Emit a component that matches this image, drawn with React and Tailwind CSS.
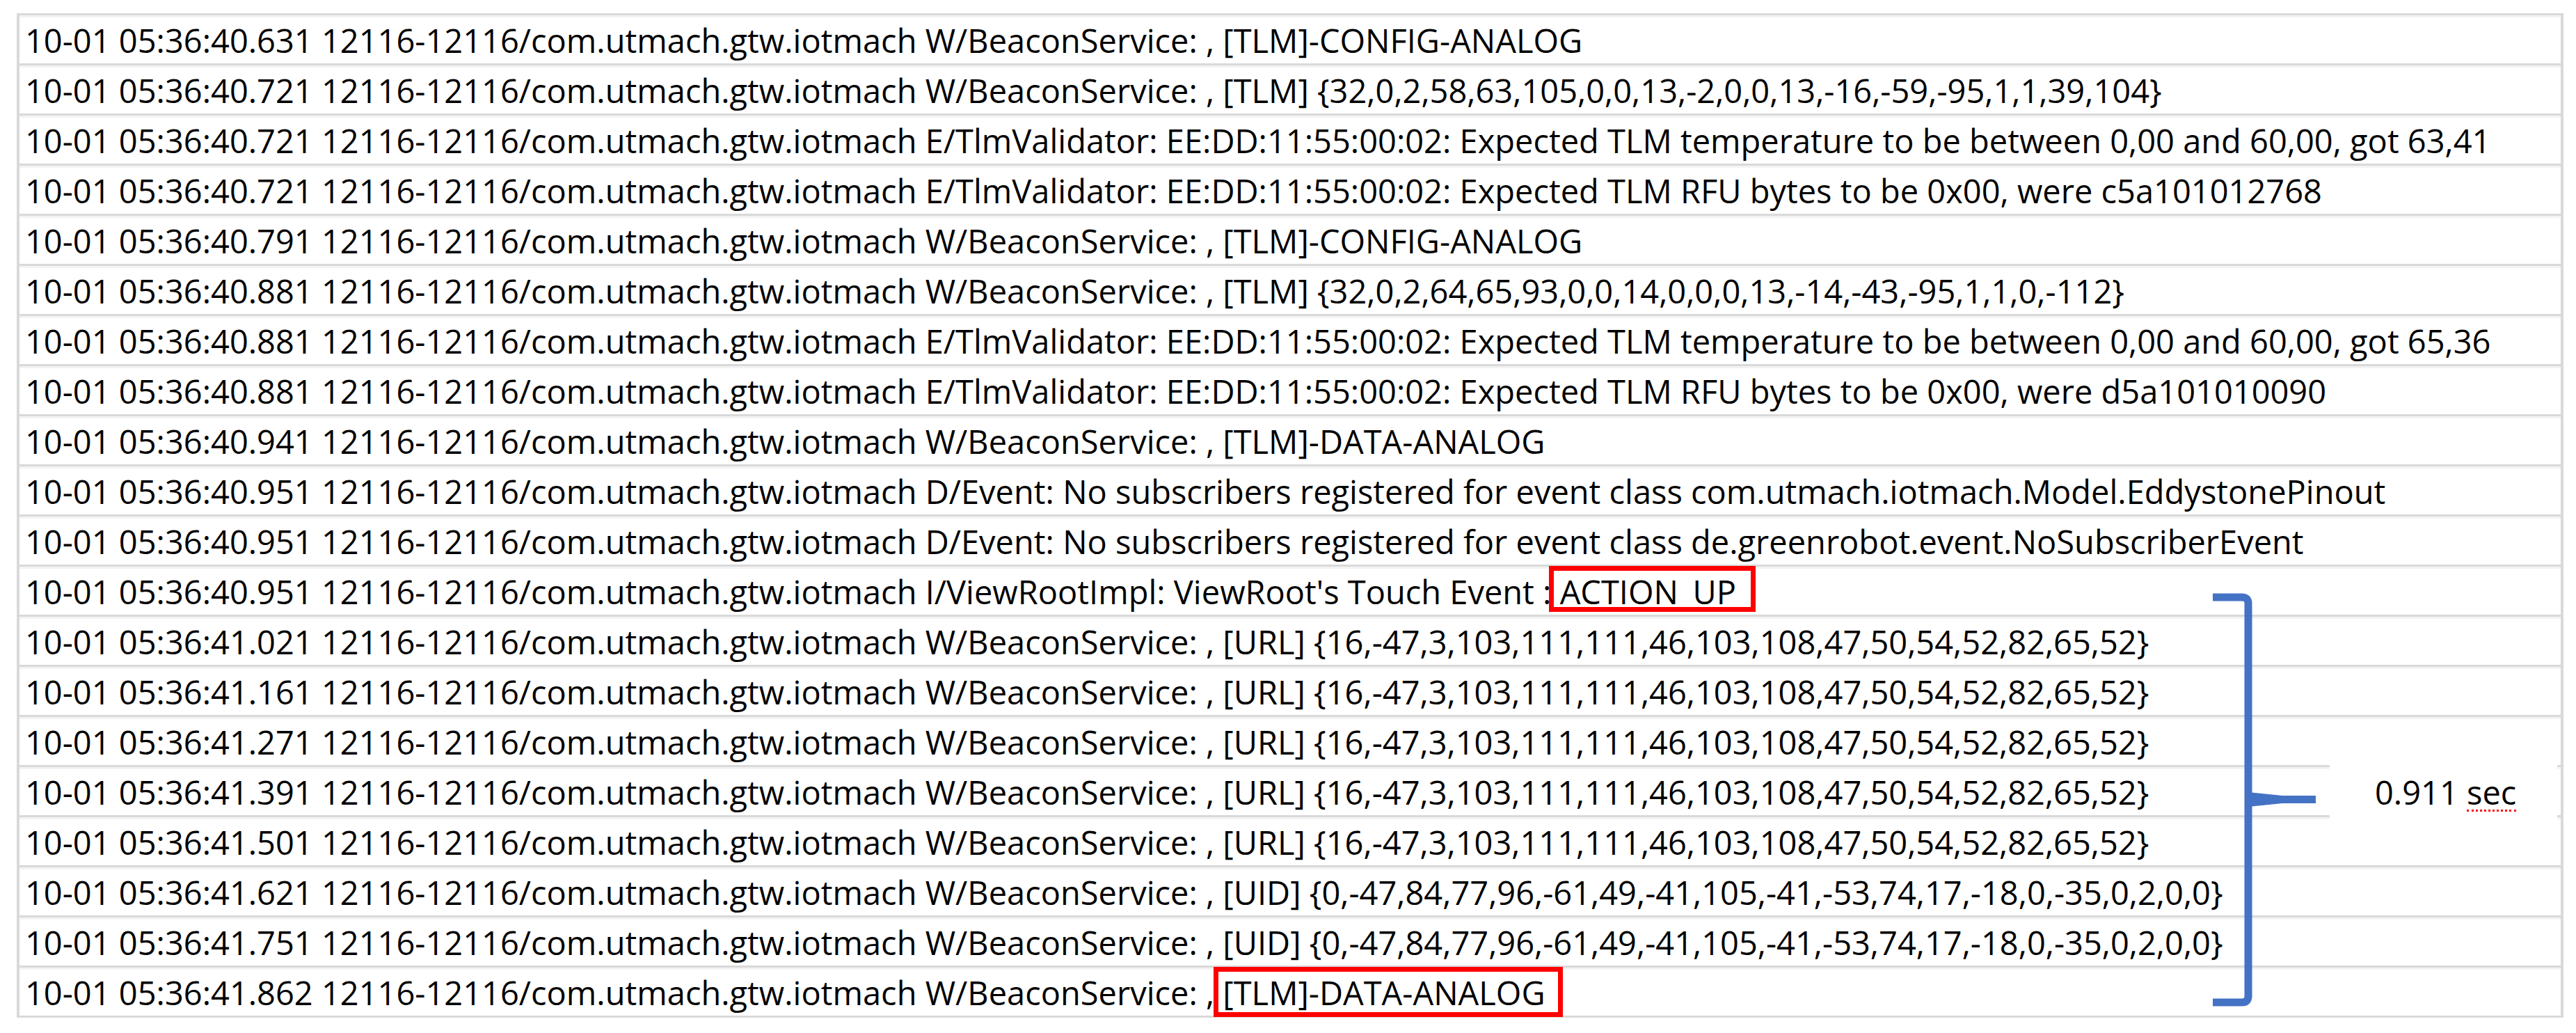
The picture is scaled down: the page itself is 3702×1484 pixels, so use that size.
import React from "react";

const P = "12116-12116/com.utmach.gtw.iotmach";
const URLV = "[URL] {16,-47,3,103,111,111,46,103,108,47,50,54,52,82,65,52}";
const UIDV = "[UID] {0,-47,84,77,96,-61,49,-41,105,-41,-53,74,17,-18,0,-35,0,2,0,0}";

const rows = [
  { t: `10-01 05:36:40.631 ${P} W/BeaconService: , [TLM]-CONFIG-ANALOG` },
  { t: `10-01 05:36:40.721 ${P} W/BeaconService: , [TLM] {32,0,2,58,63,105,0,0,13,-2,0,0,13,-16,-59,-95,1,1,39,104}` },
  { t: `10-01 05:36:40.721 ${P} E/TlmValidator: EE:DD:11:55:00:02: Expected TLM temperature to be between 0,00 and 60,00, got 63,41` },
  { t: `10-01 05:36:40.721 ${P} E/TlmValidator: EE:DD:11:55:00:02: Expected TLM RFU bytes to be 0x00, were c5a101012768` },
  { t: `10-01 05:36:40.791 ${P} W/BeaconService: , [TLM]-CONFIG-ANALOG` },
  { t: `10-01 05:36:40.881 ${P} W/BeaconService: , [TLM] {32,0,2,64,65,93,0,0,14,0,0,0,13,-14,-43,-95,1,1,0,-112}` },
  { t: `10-01 05:36:40.881 ${P} E/TlmValidator: EE:DD:11:55:00:02: Expected TLM temperature to be between 0,00 and 60,00, got 65,36` },
  { t: `10-01 05:36:40.881 ${P} E/TlmValidator: EE:DD:11:55:00:02: Expected TLM RFU bytes to be 0x00, were d5a101010090` },
  { t: `10-01 05:36:40.941 ${P} W/BeaconService: , [TLM]-DATA-ANALOG` },
  { t: `10-01 05:36:40.951 ${P} D/Event: No subscribers registered for event class com.utmach.iotmach.Model.EddystonePinout` },
  { t: `10-01 05:36:40.951 ${P} D/Event: No subscribers registered for event class de.greenrobot.event.NoSubscriberEvent` },
  { t: `10-01 05:36:40.951 ${P} I/ViewRootImpl: ViewRoot's Touch Event : `, box: "ACTION_UP", kind: 1 },
  { t: `10-01 05:36:41.021 ${P} W/BeaconService: , ${URLV}` },
  { t: `10-01 05:36:41.161 ${P} W/BeaconService: , ${URLV}` },
  { t: `10-01 05:36:41.271 ${P} W/BeaconService: , ${URLV}` },
  { t: `10-01 05:36:41.391 ${P} W/BeaconService: , ${URLV}` },
  { t: `10-01 05:36:41.501 ${P} W/BeaconService: , ${URLV}` },
  { t: `10-01 05:36:41.621 ${P} W/BeaconService: , ${UIDV}` },
  { t: `10-01 05:36:41.751 ${P} W/BeaconService: , ${UIDV}` },
  { t: `10-01 05:36:41.862 ${P} W/BeaconService: , `, box: "[TLM]-DATA-ANALOG", kind: 2 },
];

function Boxed({ text, kind }) {
  return (
    <span className="relative inline-block">
      {text}
      {kind === 1 ? (
        <span className="absolute -left-[16px] -right-[28px] -top-[13px] -bottom-[4px] border-[7px] border-[#ff0000]" />
      ) : (
        <span className="absolute -left-[13px] -right-[25px] -top-[13px] -bottom-[10px] border-[7px] border-[#ff0000]" />
      )}
    </span>
  );
}

export default function App() {
  return (
    <div className="relative w-[3702px] h-[1484px] bg-white overflow-hidden font-['Open_Sans',sans-serif] text-black">
      <div className="pt-[19px] pl-[24px]">
        <div className="w-[3660px] border-x-[4px] border-t-[3px] border-[#d9d9d9]">
          {rows.map((r, i) => (
            <div
              key={i}
              className="h-[72px] border-b-[3px] border-[#d9d9d9] flex items-end pl-[8px] pb-[8px] shadow-[inset_0_3px_0_#f3f3f3]"
            >
              <span className="whitespace-pre text-[47px] leading-[49px]">
                {r.t}
                {r.box ? <Boxed text={r.box} kind={r.kind} /> : null}
              </span>
            </div>
          ))}
        </div>
      </div>

      {/* floating text box */}
      <div className="absolute left-[3348px] top-[1060px] w-[327px] h-[170px] bg-white pl-[65px] pt-[54px]">
        <span className="whitespace-pre text-[47px] leading-[49px]">
          0.911{" "}
          <span className="inline-block border-b-[3px] border-dotted border-[#ff0000] leading-[49px]">sec</span>
        </span>
      </div>

      {/* blue bracket */}
      <svg className="absolute left-0 top-0 pointer-events-none" width="3702" height="1484" viewBox="0 0 3702 1484">
        <path
          d="M3180 858 H3222 Q3231 858 3231 867 V1431 Q3231 1440 3222 1440 H3180"
          fill="none"
          stroke="#4472c4"
          strokeWidth="11"
        />
        <path d="M3231 1138 L3280 1143 L3328 1143 L3328 1154 L3280 1154 L3231 1159 Z" fill="#4472c4" />
      </svg>
    </div>
  );
}
